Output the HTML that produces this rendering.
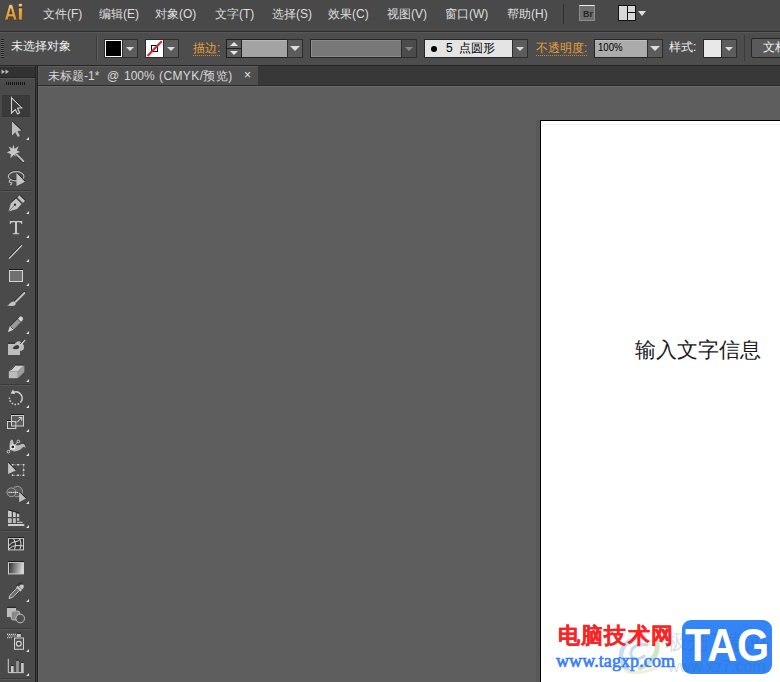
<!DOCTYPE html>
<html><head><meta charset="utf-8">
<style>
*{margin:0;padding:0;box-sizing:border-box}
html,body{width:780px;height:682px;overflow:hidden;background:#5f5f5f;font-family:"Liberation Sans",sans-serif;font-size:12px}
.a{position:absolute}
#menubar{left:0;top:0;width:780px;height:31px;background:#494949}
#menuline{left:0;top:31px;width:780px;height:1px;background:#2b2b2b}
#ctrl{left:0;top:32px;width:780px;height:33px;background:#4d4d4d;border-top:1px solid #585858}
#ctrlline{left:0;top:65px;width:780px;height:1px;background:#262626}
.mi{color:#dedede;top:7px;white-space:nowrap;font-size:12px;line-height:15px}
.logo{left:4px;top:2px;font-weight:bold;font-size:21px;color:#e39a35;line-height:22px;letter-spacing:-0.5px}
#tabrow{left:38px;top:66px;width:742px;height:20px;background:#383838;border-bottom:1px solid #2a2a2a}
#tab{left:38px;top:66px;width:220px;height:19px;background:#4f4f4f;border-top:1px solid #5c5c5c;border-left:1px solid #5a5a5a}
#canvas{left:38px;top:86px;width:742px;height:596px;background:#5e5e5e;border-left:1px solid #666;border-top:1px solid #686868}
#tool{left:0;top:78px;width:35px;height:604px;background:#4a4a4a;border-right:1px solid #505050;border-top:1px solid #575757}
#toolhdr{left:0;top:66px;width:35px;height:12px;background:#323232;border-top:1px solid #444;border-bottom:1px solid #262626}
#toolborder{left:35px;top:66px;width:3px;height:616px;background:#222;border-left:1px solid #222;border-right:1px solid #222;background:#3a3a3a}
#artboard{left:540px;top:120px;width:240px;height:562px;background:#fff;border-left:1px solid #000;border-top:1px solid #000}
#abshadow{left:536px;top:120px;width:4px;height:562px;background:#585858}
.box{border:1px solid #2d2d2d}
.dd{background:#5c5c5c;border:1px solid #2d2d2d}
.tri{width:0;height:0;border-left:4px solid transparent;border-right:4px solid transparent;border-top:4px solid #dcdcdc}
.lbl{color:#e8a03c;font-size:12px;line-height:14px;white-space:nowrap}
.tt{top:69px;color:#d8d8d8;font-size:12px;line-height:15px;white-space:nowrap}
.ul{border-bottom:1px dotted #e8a03c}
</style></head><body>
<div class="a" id="menubar"></div>
<div class="a" id="menuline"></div>
<svg class="a" style="left:0;top:0" width="30" height="30" viewBox="0 0 30 30">
<defs><linearGradient id="aig" x1="0" y1="0" x2="0" y2="1"><stop offset="0" stop-color="#f7d08c"/><stop offset="0.5" stop-color="#e8a847"/><stop offset="1" stop-color="#d9902f"/></linearGradient></defs>
<path d="M4.6 20 L9.2 4.6 L12.4 4.6 L17 20 L13.8 20 L12.9 16.7 L8.7 16.7 L7.8 20 Z M9.4 14 L12.2 14 L10.8 8.6 Z" fill="url(#aig)" fill-rule="evenodd" stroke="#2e2418" stroke-width="0.5"/>
<path d="M18.5 3.4 H22.3 V6.8 H18.5 Z M18.5 8 H22.3 V20 H18.5 Z" fill="url(#aig)" stroke="#2e2418" stroke-width="0.5"/>
</svg>
<div class="a mi" style="left:43px">文件(F)</div>
<div class="a mi" style="left:99px">编辑(E)</div>
<div class="a mi" style="left:155px">对象(O)</div>
<div class="a mi" style="left:215px">文字(T)</div>
<div class="a mi" style="left:272px">选择(S)</div>
<div class="a mi" style="left:328px">效果(C)</div>
<div class="a mi" style="left:387px">视图(V)</div>
<div class="a mi" style="left:445px">窗口(W)</div>
<div class="a mi" style="left:507px">帮助(H)</div>
<div class="a" style="left:563px;top:4px;width:1px;height:20px;background:#2f2f2f"></div>

<div class="a" id="ctrl"></div>
<div class="a" id="ctrlline"></div>
<!-- control bar -->
<div class="a" style="left:1px;top:39px;width:3px;height:19px;background:repeating-linear-gradient(#1e1e1e 0 1px,#6a6a6a 1px 2px)"></div>
<div class="a" style="left:11px;top:39px;color:#f0f0f0;font-size:12px;line-height:15px;white-space:nowrap">未选择对象</div>
<div class="a" style="left:96px;top:36px;width:1px;height:25px;background:#3a3a3a"></div>
<div class="a" style="left:97px;top:36px;width:1px;height:25px;background:#5e5e5e"></div>
<!-- fill swatch -->
<div class="a" style="left:104px;top:39px;width:19px;height:19px;background:#2a2a2a"></div>
<div class="a" style="left:105px;top:40px;width:17px;height:17px;background:#fff"></div>
<div class="a" style="left:106px;top:41px;width:15px;height:15px;background:#000"></div>
<div class="a dd" style="left:122px;top:39px;width:16px;height:19px"></div>
<div class="a tri" style="left:126px;top:47px"></div>
<!-- stroke swatch -->
<div class="a" style="left:145px;top:39px;width:19px;height:19px;background:#2a2a2a"></div>
<div class="a" style="left:146px;top:40px;width:17px;height:17px;background:#fff"></div>
<div class="a" style="left:151px;top:45px;width:7px;height:7px;border:1.3px solid #111"></div>
<svg class="a" style="left:146px;top:40px" width="17" height="17"><line x1="1.5" y1="16" x2="15.8" y2="1.2" stroke="#d02a2e" stroke-width="2.2"/></svg>
<div class="a dd" style="left:163px;top:39px;width:16px;height:19px"></div>
<div class="a tri" style="left:167px;top:47px"></div>
<!-- stroke label -->
<div class="a lbl" style="left:193px;top:41px">描边:</div>
<div class="a" style="left:193px;top:55px;width:27px;height:1px;background:repeating-linear-gradient(90deg,#c98a3a 0 1px,transparent 1px 2px)"></div>
<!-- spinner -->
<div class="a" style="left:226px;top:39px;width:16px;height:19px;background:#1f1f1f"></div>
<div class="a" style="left:227px;top:40px;width:14px;height:8px;background:#5c5c5c"></div>
<div class="a" style="left:227px;top:49px;width:14px;height:8px;background:#5c5c5c"></div>
<div class="a" style="left:230px;top:42px;width:0;height:0;border-left:4px solid transparent;border-right:4px solid transparent;border-bottom:4px solid #e6e6e6"></div>
<div class="a" style="left:230px;top:51px;width:0;height:0;border-left:4px solid transparent;border-right:4px solid transparent;border-top:4px solid #e6e6e6"></div>
<div class="a" style="left:242px;top:39px;width:46px;height:19px;background:#1f1f1f"></div>
<div class="a" style="left:242px;top:40px;width:45px;height:17px;background:#a3a3a3;border-top:1px solid #b8b8b8"></div>
<div class="a dd" style="left:287px;top:39px;width:16px;height:19px"></div>
<div class="a tri" style="left:291px;top:46px;border-left-width:5px;border-right-width:5px;border-top-width:5px;left:290px"></div>
<!-- stroke style field (disabled) -->
<div class="a" style="left:310px;top:39px;width:92px;height:19px;background:#262626"></div>
<div class="a" style="left:311px;top:40px;width:90px;height:17px;background:#787878;border:1px solid #8a8a8a;border-right-color:#777"></div>
<div class="a dd" style="left:401px;top:39px;width:16px;height:19px;background:#4c4c4c"></div>
<div class="a tri" style="left:405px;top:47px;border-top-color:#888"></div>
<!-- brush field -->
<div class="a" style="left:424px;top:39px;width:89px;height:19px;background:#262626"></div>
<div class="a" style="left:425px;top:40px;width:87px;height:17px;background:#e4e4e4"></div>
<div class="a" style="left:431px;top:46px;width:6px;height:6px;border-radius:50%;background:#000"></div>
<div class="a" style="left:446px;top:41px;color:#000;font-size:12px;line-height:15px;white-space:nowrap;letter-spacing:0">5&nbsp;&nbsp;点圆形</div>
<div class="a dd" style="left:512px;top:39px;width:16px;height:19px"></div>
<div class="a tri" style="left:516px;top:47px"></div>
<!-- opacity -->
<div class="a lbl" style="left:536px;top:41px">不透明度:</div>
<div class="a" style="left:536px;top:55px;width:51px;height:1px;background:repeating-linear-gradient(90deg,#c98a3a 0 1px,transparent 1px 2px)"></div>
<div class="a" style="left:594px;top:39px;width:54px;height:19px;background:#262626"></div>
<div class="a" style="left:595px;top:40px;width:52px;height:17px;background:#ababab;border-top:1px solid #bdbdbd"></div>
<div class="a" style="left:598px;top:40px;color:#000;font-size:11px;line-height:15px;transform:scaleX(0.87);transform-origin:0 0">100%</div>
<div class="a dd" style="left:647px;top:39px;width:16px;height:19px"></div>
<div class="a tri" style="left:650px;top:46px;border-left-width:5px;border-right-width:5px;border-top-width:5px"></div>
<!-- style -->
<div class="a" style="left:669px;top:40px;color:#f0f0f0;font-size:12px;line-height:15px;white-space:nowrap">样式:</div>
<div class="a" style="left:703px;top:39px;width:19px;height:19px;background:#262626"></div>
<div class="a" style="left:704px;top:40px;width:17px;height:17px;background:#e8e8e8"></div>
<div class="a dd" style="left:721px;top:39px;width:16px;height:19px"></div>
<div class="a tri" style="left:725px;top:47px"></div>
<div class="a" style="left:744px;top:35px;width:1px;height:26px;background:#3a3a3a"></div>
<div class="a" style="left:751px;top:38px;width:40px;height:20px;background:#5a5a5a;border:1px solid #262626;border-radius:2px"></div>
<div class="a" style="left:763px;top:40px;color:#f0f0f0;font-size:12px;line-height:15px;white-space:nowrap">文档设置</div>


<div class="a" id="tool"></div>
<div class="a" id="toolhdr"></div>
<div class="a" id="toolborder"></div>
<svg class="a" style="left:0;top:0" width="35" height="682" viewBox="0 0 35 682">
<g fill="none">
<!-- header >> -->
<path d="M1.5 69.5 L5 71.8 L1.5 74 Z M5.5 69.5 L9 71.8 L5.5 74 Z" fill="#b8b8b8"/>
<!-- grip dots -->
<path d="M6 82h1v3h-1z M8 82h1v3h-1z M10 82h1v3h-1z M12 82h1v3h-1z M14 82h1v3h-1z M16 82h1v3h-1z M18 82h1v3h-1z M20 82h1v3h-1z M22 82h1v3h-1z M24 82h1v3h-1z" fill="#141414"/>
<!-- separators -->
<path d="M1 190.5h30M1 384.5h30M1 530.5h30M1 628.5h30M1 678.5h30" stroke="#3b3b3b"/>
<path d="M1 191.5h30M1 385.5h30M1 531.5h30M1 629.5h30M1 679.5h30" stroke="#585858"/>
<!-- selected box -->
<rect x="2" y="95" width="28" height="22" fill="#3a3a3a"/>
<rect x="2.5" y="95.5" width="27" height="21" stroke="#363636"/>
<!-- small corner triangles -->
<path d="M29 137v3h-3z M29 211v3h-3z M29 235v3h-3z M29 259v3h-3z M29 283v3h-3z M29 331v3h-3z M29 379v3h-3z M29 405v3h-3z M29 429v3h-3z M29 453v3h-3z M29 501v3h-3z M29 525v3h-3z M29 599v3h-3z M29 649v3h-3z M29 673v3h-3z" fill="#e0e0e0"/>
<!-- 1 selection (outline) -->
<path d="M11.5 97.5 L22 107.8 L17.6 108.3 L19.6 112.8 L17.6 114 L15.4 109.6 L11.5 113 Z" stroke="#d4d4d4" stroke-width="1.1" stroke-linejoin="miter"/>
<path d="M12 97 L22.5 107.3" stroke="#1a1a1a" stroke-width="0.8"/>
<!-- 2 direct selection (filled) -->
<path d="M12 121.5 L21.5 130.5 L17.5 131 L19.8 136 L17.8 137 L15.3 132.3 L12 135.5 Z" fill="#bdbdbd"/>
<path d="M12.3 121 L22 130.2" stroke="#1a1a1a" stroke-width="0.8"/>
<!-- 3 magic wand -->
<path d="M13.3 144.5 L14.6 148.8 L18.8 146.3 L16.8 150.5 L20.2 152 L16.4 153.2 L17.5 157.5 L13.6 155 L10.5 158.2 L10.8 154 L6.8 152.6 L10.6 150.6 L8.6 146.6 L12.4 148.6 Z" fill="#c6c6c6"/>
<path d="M16.8 155 L23.5 161.5" stroke="#1e1e1e" stroke-width="2.8" stroke-linecap="round"/>
<path d="M16.8 154.6 L23.5 161.2" stroke="#bcbcbc" stroke-width="2" stroke-linecap="round"/>
<!-- 4 lasso -->
<ellipse cx="16.2" cy="176.3" rx="7.8" ry="4.6" stroke="#1e1e1e" stroke-width="1.2" transform="translate(0,-0.7)"/>
<ellipse cx="16.2" cy="176.3" rx="7.8" ry="4.6" stroke="#c0c0c0" stroke-width="1.2"/>
<path d="M10.5 180 C 8.5 181 9 182.3 10.8 182.5 C 12.5 182.8 12 184.5 10 185" stroke="#c0c0c0" stroke-width="1.1"/>
<path d="M16.5 172.6 L25 181.8 L16.5 186 Z" fill="#c4c4c4"/>
<path d="M16.5 172.2 L25.2 181.4" stroke="#1e1e1e" stroke-width="0.8"/>
<!-- 5 pen -->
<path d="M8.5 211.5 L11 203 L16 198.5 L21.5 204 L17 209 Z" fill="#c4c4c4"/>
<path d="M8.5 211.5 L15 204.7" stroke="#555" stroke-width="0.7"/>
<circle cx="15" cy="204.7" r="1.1" fill="#222"/>
<path d="M17.5 197.5 L19.5 195.3 L25 200.8 L23 203 Z" fill="#c4c4c4"/>
<path d="M11 202.5 L17 197 M19.5 195 L25.5 200.5" stroke="#1e1e1e" stroke-width="0.7"/>
<!-- 6 T -->
<path d="M9.8 220.5 H22.2 V224 H21.5 Q21 222.2 19 222.2 H17 V232.6 Q17.2 233.3 19.3 233.4 V234.3 H12.7 V233.4 Q14.8 233.3 15 232.6 V222.2 H13 Q11 222.2 10.5 224 H9.8 Z" fill="#c8c8c8"/>
<path d="M9.8 220.3 H22.2" stroke="#1e1e1e" stroke-width="0.7"/>
<!-- 7 line -->
<path d="M9 258.6 L21.8 245.2" stroke="#d0d0d0" stroke-width="1.3"/>
<path d="M8.6 257.6 L21.2 244.4" stroke="#1e1e1e" stroke-width="0.8"/>
<!-- 8 rect -->
<rect x="9.5" y="270.5" width="13" height="11" fill="#707070" stroke="#d4d4d4"/>
<path d="M9 269.5 H23" stroke="#1a1a1a"/>
<!-- 9 brush -->
<path d="M15.5 301.5 L24.5 292.5" stroke="#1e1e1e" stroke-width="3" stroke-linecap="round"/>
<path d="M15.7 301.7 L24.4 293" stroke="#c0c0c0" stroke-width="2.2" stroke-linecap="round"/>
<path d="M7 305.3 C 9.5 305 10 302 13.5 301.5 C 15.5 301.3 16 303 15.5 304.5 C 14.5 306.5 10 306.3 7 305.3 Z" fill="#c6c6c6"/>
<!-- 10 pencil -->
<path d="M8 332 L10 326 L19.5 316.8 Q21 315.8 22.4 317.2 Q23.6 318.6 22.6 320 L13.5 329.8 Z" fill="#9a9a9a"/>
<path d="M19.5 316.8 Q21 315.8 22.4 317.2 Q23.6 318.6 22.6 320 L20.8 322 L17.7 318.8 Z" fill="#d6d6d6"/>
<path d="M8 332 L10 326 L13.5 329.8 Z" fill="#d0d0d0"/>
<path d="M10 326 L19.5 316.8" stroke="#1e1e1e" stroke-width="0.8"/>
<path d="M10.5 326.5 L13.5 329.5 M17.5 318.8 L20.7 322" stroke="#2a2a2a" stroke-width="0.7"/>
<!-- 11 blob brush -->
<path d="M8 343.5 H15 Q17 340.8 19.5 341.2 L22.5 343.5 Q24.5 345 24 348 Q23.5 350.5 20 351 V355 H8 Z" fill="#bdbdbd"/>
<path d="M8 343.2 H15" stroke="#1a1a1a"/>
<path d="M12.5 348.6 Q14 345.2 18 345 Q20 346.5 19 348 Q17 350 12.5 348.6 Z" fill="#3a3a3a"/>
<path d="M19.5 346 L25 340" stroke="#c8c8c8" stroke-width="1.6"/>
<path d="M20 344 L24 339.6" stroke="#1e1e1e" stroke-width="0.7"/>
<!-- 12 eraser -->
<path d="M8.8 371.5 L15.3 365 H24.4 L17.8 371.6 Z" fill="#cfcfcf"/>
<path d="M8.8 371.5 H17.8 V378.2 H8.8 Z" fill="#bcbcbc"/>
<path d="M17.8 371.6 L24.4 365 V372 L17.8 378.2 Z" fill="#9c9c9c"/>
<path d="M10.5 370.5 L15.5 365.2 H24.4" stroke="#1a1a1a" stroke-width="0.8"/>
<!-- 13 rotate -->
<path d="M13.14 392.49 A6.3 6.3 0 0 1 21.26 401.35" stroke="#d0d0d0" stroke-width="1.4"/>
<path d="M21.26 401.35 A6.3 6.3 0 0 1 9.52 397.65" stroke="#d0d0d0" stroke-width="1.5" stroke-dasharray="1.6 1.5"/>
<path d="M10.6 393.4 L15.1 394.1 L13.0 389.6 Z" fill="#d4d4d4"/>
<!-- 14 scale -->
<rect x="11.5" y="415.5" width="12" height="10.5" fill="#5c5c5c" stroke="#cfcfcf"/>
<path d="M11 414.5 H24" stroke="#1a1a1a"/>
<rect x="7.5" y="421.5" width="8.3" height="7" stroke="#cfcfcf"/>
<path d="M7 420.5 H11" stroke="#1a1a1a"/>
<path d="M17 422.3 L21.7 417.6 M18.7 417.5 H21.8 V420.6" stroke="#dcdcdc" stroke-width="1"/>
<!-- 15 width tool -->
<path d="M9.8 449.5 C 9.3 445 9.8 440.5 11.6 439.3 C 13.3 438.8 14 441.2 13.4 444 Q 18 446.8 21.8 443.8 Q 24.8 442 25.6 448.3 Q 24.3 446.3 22.8 447.3 Q 19.5 451.5 14 451.4 Z" fill="#b8b8b8"/>
<path d="M11.3 439.1 C 12.6 438.6 13.6 439.5 13.6 441.5 M21.8 443.6 Q 24.2 442 25.2 444.5" stroke="#1e1e1e" stroke-width="0.7"/>
<path d="M8.4 451.7 L18.4 441.4" stroke="#e8e8e8" stroke-width="0.8"/>
<circle cx="12.8" cy="446.9" r="2" fill="#2a2a2a" stroke="#f0f0f0" stroke-width="1.2"/>
<circle cx="8.4" cy="451.7" r="1.3" fill="#444" stroke="#e6e6e6" stroke-width="0.8"/>
<circle cx="18.4" cy="441.4" r="1.3" fill="#444" stroke="#e6e6e6" stroke-width="0.8"/>
<!-- 16 free transform -->
<path d="M12.6 464.7 H23.6 V475.3 H12.6" stroke="#bdbdbd" stroke-width="0.8" stroke-dasharray="1 1"/>
<path d="M11.8 463.9h1.6v1.6h-1.6z M17.3 463.9h1.6v1.6h-1.6z M22.8 463.9h1.6v1.6h-1.6z M22.8 469.2h1.6v1.6h-1.6z M22.8 474.5h1.6v1.6h-1.6z M17.3 474.5h1.6v1.6h-1.6z M11.8 474.5h1.6v1.6h-1.6z" fill="#e0e0e0"/>
<path d="M8.1 462.5 L15.8 470.4 L8.1 474 Z" fill="#c4c4c4"/>
<path d="M8.3 462 L16.2 470" stroke="#1a1a1a" stroke-width="0.8"/>
<!-- 17 shape builder -->
<circle cx="17.3" cy="491.6" r="5.2" fill="#585858" stroke="#a8a8a8" stroke-width="0.9"/>
<circle cx="11.4" cy="492.3" r="4.4" fill="#555" stroke="#a8a8a8" stroke-width="0.9"/>
<path d="M8.6 491.8h1.2v1.2h-1.2z M10.6 491.8h1.2v1.2h-1.2z M12.6 491.8h1.2v1.2h-1.2z M14.6 491.8h1.2v1.2h-1.2z M16.6 491.8h1.2v1.2h-1.2z" fill="#f4f4f4"/>
<path d="M19.1 492 L26 498.6 L19.1 502.3 Z" fill="#c0c0c0"/>
<path d="M19.3 491.5 L26.3 498.2" stroke="#1a1a1a" stroke-width="0.8"/>
<!-- 18 perspective grid -->
<path d="M8 510.3 L11.7 511.3 V517 H8 Z M13 511.8 L15.8 512.6 V517 H13 Z M17 513.4 L19.2 514 V517 H17 Z" fill="#c8c8c8"/>
<path d="M8 518.2 H11.7 V523 H8 Z M13 518.2 H15.8 V523 H13 Z M17 518.2 H19.2 V520.8 H17 Z M17 521.8 H22.5 V523 H17 Z" fill="#bdbdbd"/>
<path d="M8 524 H24.3 V526 H8 Z" fill="#d0d0d0"/>
<path d="M8 509.7 L19.5 513.1" stroke="#1a1a1a" stroke-width="0.8"/>
<!-- 19 mesh -->
<rect x="8.5" y="538.5" width="15" height="11.4" fill="#363636" stroke="#d0d0d0"/>
<path d="M8 537.6 H24" stroke="#1a1a1a"/>
<path d="M9 545.5 Q12 541.5 16 541.5 Q19 541.3 20.5 538.8 M13.5 538.8 Q16.8 543 14.5 549.5 M9 549 Q12 545.5 17 545.5 L23.3 546 M19.5 538.8 Q22 543 20 549.5" stroke="#dcdcdc" stroke-width="1"/>
<!-- 20 gradient -->
<defs><linearGradient id="gr" x1="0" x2="1" y1="0" y2="0.12"><stop offset="0" stop-color="#2a2a2a"/><stop offset="1" stop-color="#d8d8d8"/></linearGradient></defs>
<rect x="8.5" y="562.5" width="15" height="11.4" fill="url(#gr)" stroke="#d0d0d0"/>
<path d="M8 561.6 H24" stroke="#1a1a1a"/>
<!-- 21 eyedropper -->
<path d="M9 598.5 L10.2 595 L17.5 587.7 L19.8 590 L12.5 597.3 Z" fill="#6a6a6a" stroke="#e4e4e4" stroke-width="0.8"/>
<path d="M16 587 L20.5 591.5 L22 590 L17.5 585.5 Z" fill="#c8c8c8"/>
<path d="M19 586.5 Q21.5 583.3 23.3 585 Q25 586.8 22 589.5 Z" fill="#c8c8c8"/>
<path d="M16 586.5 L19 583.7 Q21 582.5 22.5 583.5" stroke="#1a1a1a" stroke-width="0.8"/>
<!-- 22 blend -->
<rect x="7" y="607.7" width="9" height="9.3" fill="#bdbdbd"/>
<path d="M7 607.3 H16" stroke="#1a1a1a"/>
<rect x="11.2" y="611" width="8.6" height="9" rx="2" fill="#8a8a8a" stroke="#bdbdbd" stroke-width="0.9"/>
<circle cx="20.2" cy="618.5" r="4.3" fill="#4e4e4e" stroke="#c4c4c4" stroke-width="1"/>
<!-- 23 symbol sprayer -->
<path d="M7.00 633.8h1.1v1.1h-1.1z M8.90 633.8h1.1v1.1h-1.1z M10.80 633.8h1.1v1.1h-1.1z M12.70 633.8h1.1v1.1h-1.1z M14.60 633.8h1.1v1.1h-1.1z M7.95 635.5h1.1v1.1h-1.1z M9.85 635.5h1.1v1.1h-1.1z M11.75 635.5h1.1v1.1h-1.1z M13.65 635.5h1.1v1.1h-1.1z M15.55 635.5h1.1v1.1h-1.1z M7.00 637.2h1.1v1.1h-1.1z M8.90 637.2h1.1v1.1h-1.1z M10.80 637.2h1.1v1.1h-1.1z" fill="#e0e0e0"/>
<rect x="17" y="633.5" width="3.8" height="3.4" fill="#c8c8c8"/>
<path d="M17 633.2 H21" stroke="#1a1a1a"/>
<rect x="14.5" y="638" width="9" height="11.3" fill="#505050" stroke="#cfcfcf"/>
<circle cx="18.8" cy="643.8" r="2.4" fill="#3a3a3a" stroke="#d4d4d4" stroke-width="1.2"/>
<!-- 24 graph -->
<path d="M8.3 658.8 V672.6 H23.8" stroke="#d0d0d0" stroke-width="1"/>
<rect x="11" y="665.8" width="2.6" height="6.5" fill="#c8c8c8"/>
<rect x="16.2" y="660.6" width="2.6" height="11.7" fill="#9a9a9a"/>
<rect x="21.1" y="662.7" width="2.6" height="9.6" fill="#c8c8c8"/>
<path d="M11 665.5 H13.6 M16.2 660.3 H18.8 M21.1 662.4 H23.7" stroke="#1a1a1a" stroke-width="0.8"/>
</g>
</svg>

<div class="a" id="tabrow"></div>
<div class="a" id="tab"></div>
<div class="a" id="canvas"></div>
<div class="a" id="abshadow"></div>
<div class="a" id="artboard"></div>
<div class="a" style="left:544px;top:124px;width:236px;height:1px;background:#f3f3f3"></div>

<div class="a tt" style="left:48px">未标题-1*</div>
<div class="a tt" style="left:107px">@</div>
<div class="a tt" style="left:124px">100%</div>
<div class="a tt" style="left:159px;letter-spacing:0.4px">(CMYK/预览)</div>
<div class="a" style="left:244px;top:68px;color:#e8e8e8;font-size:12px;line-height:15px">×</div>
<!-- Br & layout -->
<div class="a" style="left:579px;top:5px;width:16px;height:16px;background:#6e6e6e;border:1px solid #8c8c8c;border-top-color:#eee"></div>
<div class="a" style="left:583px;top:7px;color:#262626;font-size:9px;line-height:14px;font-weight:bold">Br</div>
<div class="a" style="left:618px;top:5px;width:18px;height:16px;border:1px solid #111;background:#d8d8d8"></div>
<div class="a" style="left:627px;top:6px;width:1px;height:14px;background:#111"></div>
<div class="a" style="left:628px;top:12px;width:7px;height:1px;background:#111"></div>
<div class="a" style="left:638px;top:11px;width:0;height:0;border-left:4px solid transparent;border-right:4px solid transparent;border-top:5px solid #e0e0e0"></div>
<!-- artboard text -->
<div class="a" style="left:635px;top:337px;color:#1a1a1a;font-size:21px;line-height:26px;white-space:nowrap">输入文字信息</div>

<!-- watermark -->
<svg class="a" style="left:610px;top:628px" width="64" height="52" viewBox="610 628 64 52">
<path d="M644 637 C 630 637 621 646 621 656 C 621 662 624 667 628 670" stroke="#c9ddf0" stroke-width="4.5" fill="none" stroke-linecap="round"/>
<path d="M647 645 C 638 642 630 648 631 655 C 632 660 640 660 644 656" stroke="#c4daf0" stroke-width="3" fill="none" stroke-linecap="round"/>
<path d="M656 641 C 660 650 654 662 640 668" stroke="#cfe6c8" stroke-width="5" fill="none" stroke-linecap="round"/>
<path d="M626 671 C 636 674 648 672 656 668" stroke="#eef0d6" stroke-width="3" fill="none" stroke-linecap="round"/>
</svg>
<div class="a" id="wmred" style="left:558px;top:623px;color:#fb2424;font-size:22px;line-height:26px;font-weight:bold;-webkit-text-stroke:0.2px #fb2424;letter-spacing:1.2px;white-space:nowrap">电脑技术网</div>
<div class="a" id="wmblue" style="left:556px;top:650px;color:#3a80f4;font-size:18px;line-height:22px;-webkit-text-stroke:0.65px #3a80f4;font-family:'Liberation Serif',serif;white-space:nowrap;letter-spacing:0.1px">www.tagxp.com</div>
<div class="a" style="left:682px;top:620px;width:90px;height:54px;border-radius:9px;background:#3384f6"></div>
<div class="a" style="left:666px;top:630px;color:rgba(40,80,130,0.2);font-size:21px;line-height:24px;white-space:nowrap">极光下载站</div>
<div class="a" style="left:668px;top:657px;color:rgba(40,100,90,0.2);font-size:16px;line-height:20px;white-space:nowrap">www.xz7.com</div>
<div class="a" id="wmtag" style="left:685px;top:618px;color:#fff;font-size:46px;line-height:54px;font-weight:bold;white-space:nowrap;transform:scaleX(0.9);transform-origin:0 0">TAG</div>
</body></html>
